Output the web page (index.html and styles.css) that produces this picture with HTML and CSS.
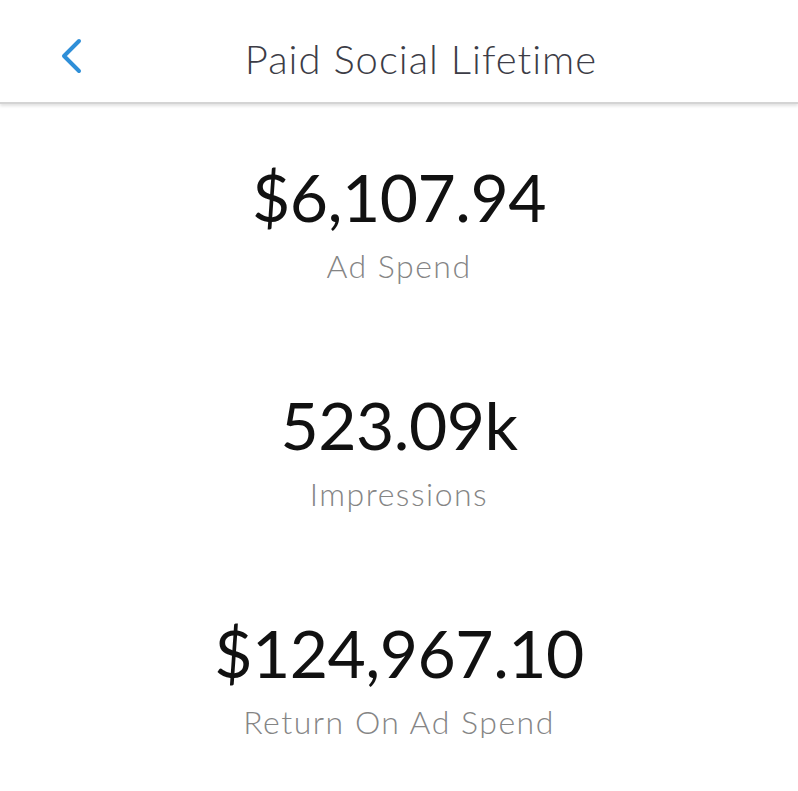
FILE: index.html
```html
<!DOCTYPE html>
<html lang="en">
<head>
    <meta charset="UTF-8">
    <meta name="viewport" content="width=device-width, initial-scale=1.0">
    <title>Paid Social Lifetime</title>
    <link rel="stylesheet" href="styles.css">
</head>
<body>
    <!-- top bar -->
    <header class="topbar">
        <button class="back" aria-label="Back">
            <svg width="24" height="36" viewBox="0 0 24 36">
                <path d="M21 3 L6 18 L21 33" fill="none" stroke="#2f8fd8" stroke-width="4" stroke-linecap="round" stroke-linejoin="round"/>
            </svg>
        </button>
        <h1 class="title">Paid Social Lifetime</h1>
    </header>

    <!-- stats -->
    <main class="stats">
        <div class="stat">
            <div class="value">$6,107.94</div>
            <div class="label">Ad Spend</div>
        </div>
        <div class="stat">
            <div class="value">523.09k</div>
            <div class="label">Impressions</div>
        </div>
        <div class="stat">
            <div class="value">$124,967.10</div>
            <div class="label">Return On Ad Spend</div>
        </div>
    </main>
</body>
</html>
```

FILE: styles.css
```css
body {
    margin: 0;
    background-color: #ffffff;
    font-family: Lato, "Open Sans", sans-serif;
}

/* top bar */
.topbar {
    position: relative;
    height: 87px;
    padding-top: 15px;
    display: flex;
    align-items: center;
    justify-content: center;
    border-bottom: 2px solid #d4d4d4;
    box-shadow: 0 2px 3px rgba(0, 0, 0, 0.12);
}

.back {
    position: absolute;
    left: 58px;
    top: 38px;
    padding: 0;
    border: none;
    background: none;
}

.title {
    margin: 0;
    padding-left: 44px;
    font-size: 40px;
    line-height: 48px;
    font-weight: 300;
    color: #3c3c46;
    letter-spacing: 1px;
}

/* stats */
.stats {
    display: flex;
    flex-direction: column;
    align-items: center;
    padding-top: 60px;
    gap: 110px;
}

.stat {
    text-align: center;
}

.value {
    font-size: 66px;
    line-height: 66px;
    color: #111111;
    letter-spacing: -0.5px;
}

.label {
    margin-top: 20px;
    font-size: 32px;
    line-height: 32px;
    font-weight: 300;
    color: #858585;
    letter-spacing: 1.5px;
}
```
